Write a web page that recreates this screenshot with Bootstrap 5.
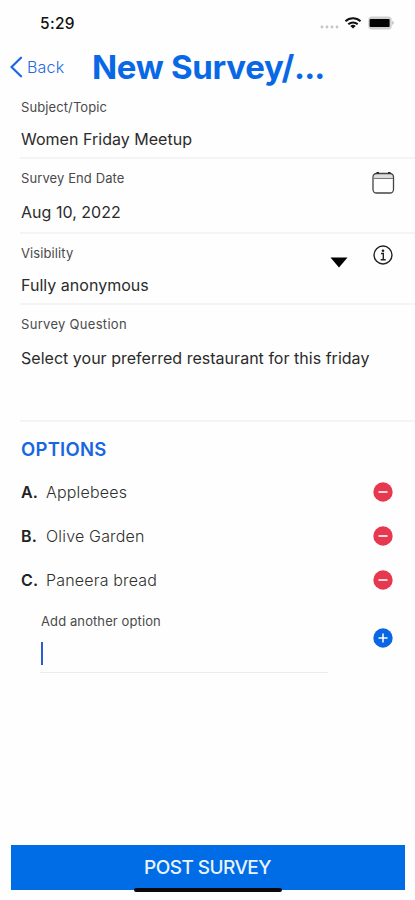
<!DOCTYPE html>
<html lang="en">
<head>
<meta charset="utf-8">
<meta name="viewport" content="width=device-width, initial-scale=1">
<title>New Survey</title>
<link href="https://cdn.jsdelivr.net/npm/bootstrap@5.3.0/dist/css/bootstrap.min.css" rel="stylesheet">
<style>
  body { font-family: Inter, "Liberation Sans", sans-serif; color: #2b2b2b; background: #fefefe; }
  .screen { height: 900px; overflow: hidden; }
  .status { height: 46px; padding: 0 20px 0 40px; color: #111; }
  .clock { font-size: 15.5px; font-weight: 500; letter-spacing: .3px; line-height: 46px; padding-top: 1px; }
  .topbar { height: 42px; padding-left: 10px; margin-bottom: 2px; }
  .back { width: 82px; color: #2468e0; font-size: 16px; font-weight: 300; letter-spacing: .2px; }
  .title { font-size: 33px; font-weight: 700; color: #0968e5; line-height: 42px; letter-spacing: -.3px; }
  .title span { letter-spacing: -1px; }
  .field-row { margin-left: 20px; padding-left: 1px; border-bottom: 2px solid #f4f4f4; }
  .f-subject { height: 69px; padding-top: 7px; }
  .f-date { height: 75px; padding-top: 9px; }
  .f-vis { height: 71px; padding-top: 9px; }
  .f-question { height: 117px; padding-top: 9px; }
  .lbl { font-size: 13px; line-height: 20px; color: #4a4a4a; letter-spacing: .1px; }
  .val { font-size: 16px; line-height: 22px; letter-spacing: .02px; }
  .f-subject .val, .f-vis .val { margin-top: 11px; }
  .f-date .val, .f-question .val { margin-top: 13px; }
  .f-question .lbl { letter-spacing: .3px; }
  .ico-cal { margin: 3px 20px 0 0; }
  .ico-arrow { margin: 14px 25px 0 0; }
  .ico-info { margin: 1px 22px 0 0; }
  .heading { font-size: 18.5px; font-weight: 600; color: #1766e2; line-height: 24px; letter-spacing: .25px; margin: 15px 0 9px 21px; }
  .opt { height: 44px; padding-left: 21px; padding-right: 22px; font-size: 16px; color: #303030; font-weight: 300; letter-spacing: .18px; }
  .opt b { width: 25px; font-weight: 600; color: #222; }
  .add { height: 71px; padding-left: 40px; padding-right: 22px; }
  .entry { width: 288px; border-bottom: 1px solid #ececec; padding-top: 9px; }
  .entry .lbl { padding-left: 1px; letter-spacing: .1px; }
  .caret { width: 2px; height: 23px; background: #2a5bd0; margin: 11px 0 0 1px; }
  .post { height: 45px; margin: 0 10px 10px 11px; background: #006de6; color: #eaf3ff; font-size: 19px; font-weight: 500; letter-spacing: -.55px; }
  .post span { display: block; padding: 2px 1px 0 0; }
  .home { left: 134px; top: 888px; width: 148px; height: 4px; border-radius: 2px; background: #0a0a0a; }
</style>
<script src="https://cdn.jsdelivr.net/npm/bootstrap@5.3.0/dist/js/bootstrap.bundle.min.js"></script>
</head>
<body>
<main class="screen position-relative d-flex flex-column">
  <div class="status d-flex justify-content-between align-items-center">
    <span class="clock">5:29</span>
    <svg width="77" height="16" viewBox="0 0 77 16" aria-hidden="true">
      <g fill="#c4c4c4"><circle cx="4" cy="12" r="1.4"/><circle cx="9" cy="12" r="1.4"/><circle cx="14" cy="12" r="1.4"/><circle cx="19" cy="12" r="1.4"/></g>
      <g fill="none" stroke="#111" stroke-width="2"><path d="M27.500 6.300a11 11 0 0 1 15 0"/><path d="M30.300 9.200a7 7 0 0 1 9.400 0"/></g>
      <path d="M32.300 11a4 4 0 0 1 5.400 0L35 13.600z" fill="#111"/>
      <rect x="50.300" y="1.600" width="23.400" height="12.800" rx="3.500" fill="#d0d0d0"/>
      <path d="M74.300 5.500q3 2.300 0 4.600z" fill="#b5b5b5"/>
      <rect x="51.600" y="4" width="20" height="8" rx="1" fill="#050505"/>
    </svg>
  </div>
  <header class="topbar d-flex align-items-center">
    <a class="back d-flex align-items-center text-decoration-none" href="#">
      <svg class="me-1" width="13" height="22" viewBox="0 0 13 22" fill="none" stroke="#1766e2" stroke-width="2.200" stroke-linecap="round" stroke-linejoin="round"><path d="M11 1.700L1.500 11 11 20.300"/></svg>Back</a>
    <h1 class="title mb-0">New Survey/<span>...</span></h1>
  </header>

  <section class="field-row f-subject">
    <div class="lbl">Subject/Topic</div>
    <div class="val">Women Friday Meetup</div>
  </section>
  <section class="field-row f-date d-flex justify-content-between">
    <div><div class="lbl">Survey End Date</div><div class="val">Aug 10, 2022</div></div>
    <svg class="ico-cal" width="24" height="24" viewBox="0 0 24 24" fill="none">
      <path d="M3 8V5.500Q3 2.500 6 2.500H19Q22 2.500 22 5.500V8z" fill="#ddd"/>
      <rect x="2" y="2.500" width="20.500" height="19.500" rx="3.500" stroke="#444" stroke-width="1.300"/>
      <path d="M2.500 7.500h19.500" stroke="#777"/><path d="M5.500 1.800h2.500M17 1.800h2.500" stroke="#222" stroke-width="1.600"/>
    </svg>
  </section>
  <section class="field-row f-vis d-flex">
    <div class="flex-grow-1"><div class="lbl">Visibility</div><div class="val">Fully anonymous</div></div>
    <svg class="ico-arrow" width="18" height="11" viewBox="0 0 18 11"><path d="M.5.500h17L9 10.500z" fill="#000"/></svg>
    <svg class="ico-info" width="20" height="22" viewBox="0 0 20 22" fill="none" stroke="#222"><circle cx="10" cy="11" r="9" stroke-width="1.400"/><circle cx="10" cy="6.700" r="1.300" fill="#222" stroke="none"/><path d="M8 9.500h2.300v6M7.700 15.700h5" stroke-width="1.400"/></svg>
  </section>
  <section class="field-row f-question">
    <div class="lbl">Survey Question</div>
    <div class="val">Select your preferred restaurant for this friday</div>
  </section>

  <h2 class="heading">OPTIONS</h2>
  <div class="opt d-flex align-items-center"><b>A.</b><span class="flex-grow-1">Applebees</span>
    <svg width="20" height="20" viewBox="0 0 20 20"><circle cx="10" cy="10" r="9.700" fill="#e63950"/><path d="M5.500 10h9" stroke="#fff" stroke-width="1.600"/></svg></div>
  <div class="opt d-flex align-items-center"><b>B.</b><span class="flex-grow-1">Olive Garden</span>
    <svg width="20" height="20" viewBox="0 0 20 20"><circle cx="10" cy="10" r="9.700" fill="#e63950"/><path d="M5.500 10h9" stroke="#fff" stroke-width="1.600"/></svg></div>
  <div class="opt d-flex align-items-center"><b>C.</b><span class="flex-grow-1">Paneera bread</span>
    <svg width="20" height="20" viewBox="0 0 20 20"><circle cx="10" cy="10" r="9.700" fill="#e63950"/><path d="M5.500 10h9" stroke="#fff" stroke-width="1.600"/></svg></div>
  <div class="add d-flex align-items-center justify-content-between">
    <div class="entry align-self-stretch"><div class="lbl">Add another option</div><div class="caret"></div></div>
    <svg width="20" height="20" viewBox="0 0 20 20"><circle cx="10" cy="10" r="9.700" fill="#0b66e4"/><path d="M5.500 10h9M10 5.500v9" stroke="#fff" stroke-width="1.500"/></svg>
  </div>

  <button class="post btn rounded-0 border-0 p-0 mt-auto" type="button"><span>POST SURVEY</span></button>
  <div class="home position-absolute"></div>
</main>
</body>
</html>
